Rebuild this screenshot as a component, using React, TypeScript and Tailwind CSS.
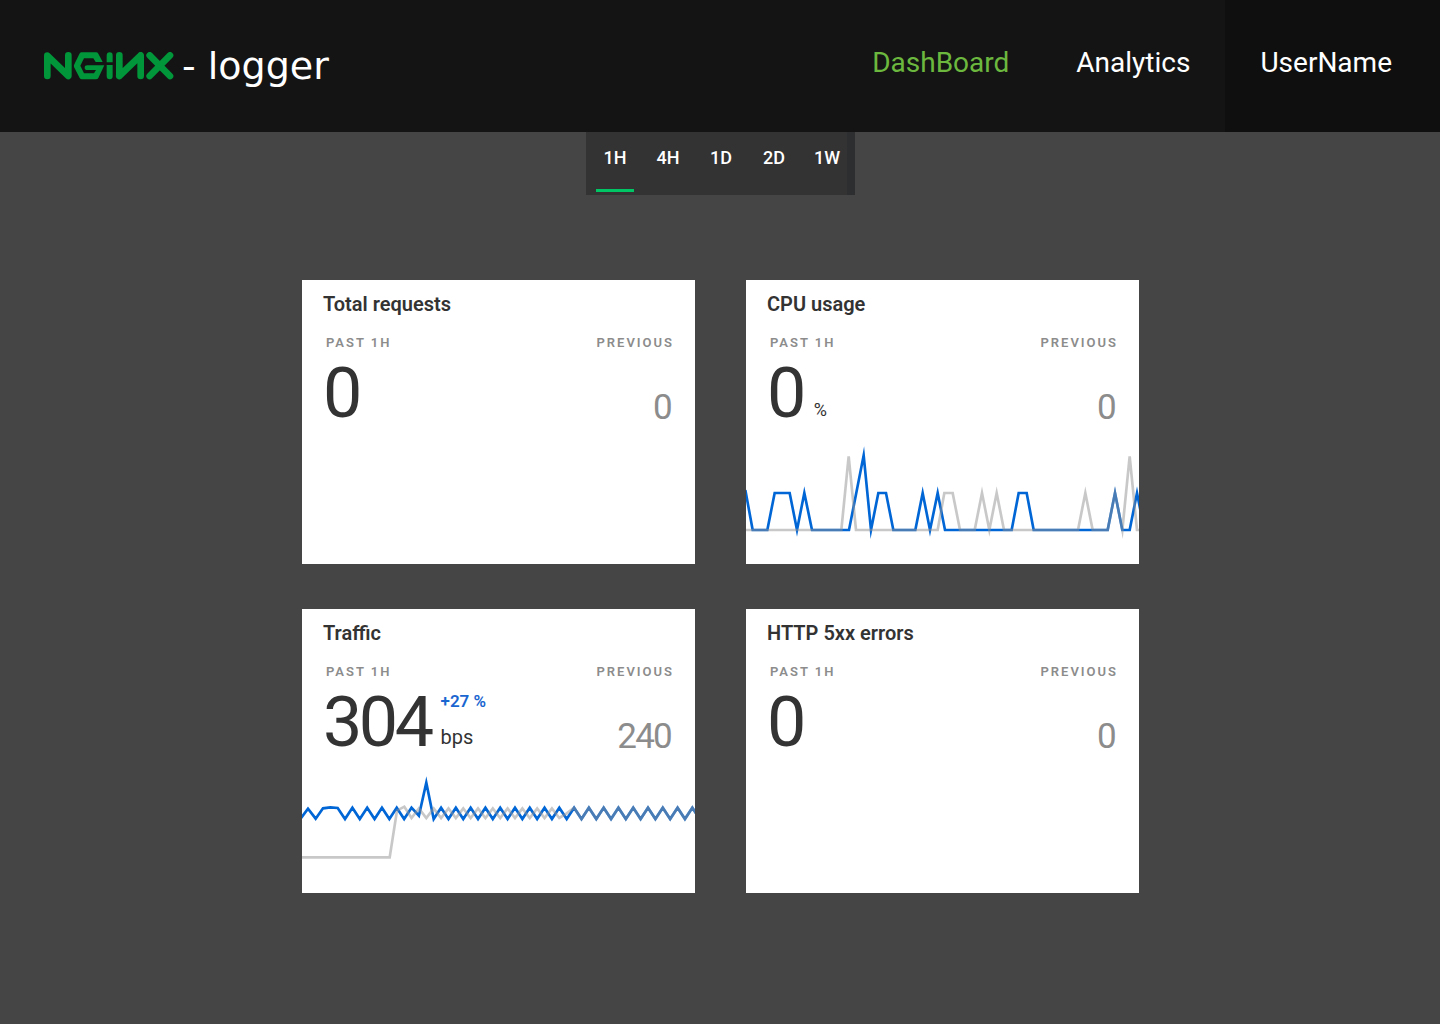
import { useState } from "react";

const STEP = 22.17;

const pathFrom = (points: number[][]) =>
  points.map(([x, y], i) => `${i ? "L" : "M"}${x} ${y}`).join(" ");

const cpuCurrent = pathFrom([
  [16, 180], [38, 300], [82, 300], [104, 189], [149, 189], [171, 300], [193, 189], [216, 300],
  [327, 300], [371, 76], [393, 300], [415, 189], [438, 189], [460, 300], [526, 300], [548, 189],
  [570, 300], [593, 189], [615, 300], [815, 300], [836, 189], [860, 189], [881, 300],
  [1103, 300], [1125, 189], [1147, 300], [1169, 300], [1191, 189], [1213, 300],
]);

const cpuPrevious = pathFrom([
  [10, 300], [304, 300], [326, 79], [348, 300], [593, 300], [613, 189], [638, 189], [660, 300],
  [704, 300], [726, 189], [748, 300], [770, 189], [792, 300], [1014, 300], [1036, 189],
  [1058, 300], [1103, 300], [1125, 189], [1147, 300], [1169, 79], [1191, 300], [1213, 300],
]);

const trafficBlue: number[][] = [
  [2, 176], [24, 146], [47, 176], [69, 145], [91, 142], [113, 144],
];
for (let i = 6; i <= 54; i++) {
  const x = 2 + i * STEP;
  if (i === 16) trafficBlue.push([x, 167]);
  else if (i === 17) trafficBlue.push([x, 68]);
  else trafficBlue.push([x, i % 2 === 0 ? 177 : 143]);
}

const trafficGray: number[][] = [
  [2, 292], [269, 292], [291, 152], [313, 140],
];
for (let i = 15; i <= 54; i++) {
  const x = 2 + i * STEP;
  if (i === 36) trafficGray.push([x, 160]);
  else if (i < 36) trafficGray.push([x, i % 2 === 0 ? 145 : 174]);
  else trafficGray.push([x, i % 2 === 0 ? 177 : 143]);
}

const trafficCurrent = pathFrom(trafficBlue);
const trafficPrevious = pathFrom(trafficGray);

type Metric = {
  title: string;
  value: string;
  previous: string;
  unit?: string;
  unitClass?: string;
  change?: string;
  chart?: { viewBox: string; current: string; previous: string };
};

const metrics: Metric[] = [
  { title: "Total requests", value: "0", previous: "0" },
  {
    title: "CPU usage",
    value: "0",
    previous: "0",
    unit: "%",
    unitClass: "pl-px text-lg leading-5",
    chart: { viewBox: "18 30 1179 372", current: cpuCurrent, previous: cpuPrevious },
  },
  {
    title: "Traffic",
    value: "304",
    previous: "240",
    unit: "bps",
    unitClass: "text-xl leading-6",
    change: "+27 %",
    chart: { viewBox: "6 27 1179 372", current: trafficCurrent, previous: trafficPrevious },
  },
  { title: "HTTP 5xx errors", value: "0", previous: "0" },
];

function Logo() {
  return (
    <svg viewBox="42 50 390 84" className="h-7 w-[130px]" role="img" aria-label="NGINX">
      <g fill="none" stroke="#019639" strokeWidth="20" strokeLinecap="round" strokeLinejoin="round">
        <path d="M52 122V61L115 122V60" />
        <path d="M268 122V60M268 122L332 60V122" />
        <path d="M359 60L420 122M420 60L359 122" />
      </g>
      <g fill="#019639">
        <path d="M154 51H198Q203 51 205 55L218 80H197L190 69H162L151 91L162 114H192L198 104H172Q164 104 164 97Q164 90 172 90H223L205 128Q203 132 198 132H156Q151 132 149 128L132 95Q131 91 133 87L148 56Q150 51 154 51Z" />
        <path d="M230 81V61Q230 51 239 51Q248 51 248 61V81Z" />
        <path d="M230 89H248V122Q248 132 239 132Q230 132 230 122Z" />
      </g>
    </svg>
  );
}

function Header() {
  return (
    <header className="flex h-[132px] items-stretch justify-between bg-[#141414] text-white">
      <a href="#" className="flex items-center pl-11">
        <Logo />
        <span className="ml-2 font-['DejaVu_Sans',sans-serif] text-[38px] leading-10">- logger</span>
      </a>
      <nav className="flex text-[28px] leading-8">
        <a href="#dashboard" className="pt-[47px] pr-[34px] text-[#6cb83f]">DashBoard</a>
        <a href="#analytics" className="pt-[47px] pr-[35px] pl-[33px]">Analytics</a>
        <a href="#user" className="bg-[#0f0f0f] pt-[47px] pr-12 pl-[35px]">UserName</a>
      </nav>
    </header>
  );
}

function RangeTabs() {
  const [active, setActive] = useState("1H");
  return (
    <div className="flex h-[63px] gap-[15px] border-r-8 border-[#2d2e30] bg-[#333333] pl-[10px] pr-px">
      {["1H", "4H", "1D", "2D", "1W"].map((range) => (
        <button
          key={range}
          type="button"
          aria-pressed={active === range}
          onClick={() => setActive(range)}
          className={
            "mb-[3px] flex w-[38px] justify-center border-b-[3px] pt-[14px] text-lg leading-6 font-medium text-white " +
            (active === range ? "border-[#00c666]" : "border-transparent")
          }
        >
          {range}
        </button>
      ))}
    </div>
  );
}

function MetricCard({ metric }: { metric: Metric }) {
  return (
    <section className="flex h-[284px] flex-col bg-white pt-3 text-[#333333]">
      <h2 className="px-[21px] text-xl leading-6 font-semibold">{metric.title}</h2>
      <div className="mt-[19px] flex justify-between pr-[21px] pl-6 text-[13px] leading-4 font-semibold tracking-[2px] text-[#8c8c8c]">
        <span>PAST 1H</span>
        <span>PREVIOUS</span>
      </div>
      <div className="mt-[5px] flex items-end pr-6 pl-[21px]">
        <span className="text-[70px] leading-[74px] tracking-tighter">{metric.value}</span>
        {metric.unit && (
          <div className="flex flex-col gap-3 pb-[10px] pl-[10px]">
            {metric.change && (
              <span className="text-[17px] leading-6 font-semibold text-[#1a66d0]">{metric.change}</span>
            )}
            <span className={metric.unitClass}>{metric.unit}</span>
          </div>
        )}
        <span className="ml-auto pb-[2px] text-[35px] leading-10 tracking-tighter text-[#8c8c8c]">{metric.previous}</span>
      </div>
      {metric.chart && (
        <svg viewBox={metric.chart.viewBox} className="mt-auto w-full" aria-hidden="true">
          <g fill="none" strokeWidth="8" strokeMiterlimit="10">
            <path d={metric.chart.current} stroke="#0066d6" />
            <path d={metric.chart.previous} stroke="#919191" strokeOpacity="0.5" />
          </g>
        </svg>
      )}
    </section>
  );
}

export default function App() {
  return (
    <div className="min-h-screen bg-[#454545] font-[Roboto,sans-serif]">
      <Header />
      <main className="flex flex-col items-center pb-10 pl-px">
        <RangeTabs />
        <div className="mt-[85px] grid w-full max-w-[837px] grid-cols-2 gap-x-[51px] gap-y-[45px]">
          {metrics.map((metric) => (
            <MetricCard key={metric.title} metric={metric} />
          ))}
        </div>
      </main>
    </div>
  );
}
